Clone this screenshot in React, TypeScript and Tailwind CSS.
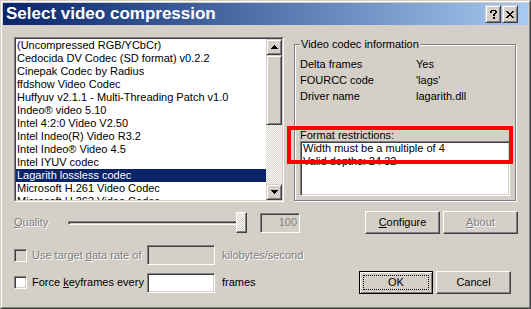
import type { ReactNode } from 'react'

const codecs = [
  '(Uncompressed RGB/YCbCr)',
  'Cedocida DV Codec (SD format) v0.2.2',
  'Cinepak Codec by Radius',
  'ffdshow Video Codec',
  'Huffyuv v2.1.1 - Multi-Threading Patch v1.0',
  'Indeo® video 5.10',
  'Intel 4:2:0 Video V2.50',
  'Intel Indeo(R) Video R3.2',
  'Intel Indeo® Video 4.5',
  'Intel IYUV codec',
  'Lagarith lossless codec',
  'Microsoft H.261 Video Codec',
  'Microsoft H.263 Video Codec',
]
const selected = 10

const info = [
  ['Delta frames', 'Yes'],
  ['FOURCC code', "'lags'"],
  ['Driver name', 'lagarith.dll'],
]

const HELP = ['.XXXXX.', 'XX...XX', 'XX...XX', '....XX.', '...XX..', '...XX..', '.......', '...XX..', '...XX..']
const CLOSE = ['XX....XX', '.XX..XX.', '..XXXX..', '...XX...', '..XXXX..', '.XX..XX.', 'XX....XX']
const UP = ['...X...', '..XXX..', '.XXXXX.', 'XXXXXXX']
const DOWN = ['XXXXXXX', '.XXXXX.', '..XXX..', '...X...']

// tiny pixel glyphs, drawn one cell at a time
function Pixels({ rows }: { rows: string[] }) {
  const w = rows[0].length
  const h = rows.length
  return (
    <svg width={w} height={h} viewBox={`0 0 ${w} ${h}`} shapeRendering="crispEdges">
      {rows.flatMap((r, y) =>
        r.split('').map((c, x) => (c === 'X' ? <rect key={`${x}-${y}`} x={x} y={y} width={1} height={1} fill="#000" /> : null))
      )}
    </svg>
  )
}

const raised3d = 'border border-t-[#d4d0c8] border-l-[#d4d0c8] border-r-[#404040] border-b-[#404040] shadow-[inset_1px_1px_0_#fff,inset_-1px_-1px_0_#808080] bg-[#d4d0c8]'
const push = 'border border-t-white border-l-white border-r-[#404040] border-b-[#404040] shadow-[inset_-1px_-1px_0_#808080] bg-[#d4d0c8]'
const sunken = 'border border-t-[#808080] border-l-[#808080] border-r-white border-b-white shadow-[inset_1px_1px_0_#404040,inset_-1px_-1px_0_#d4d0c8]'
const dim = 'text-[#808080] [text-shadow:1px_1px_0_#fff]'
const checker = 'bg-[image:repeating-conic-gradient(#fff_0_25%,#d4d0c8_0_50%)] bg-[length:2px_2px]'

function Button({ children, className = '' }: { children: ReactNode; className?: string }) {
  return <div className={`flex items-center justify-center h-[23px] w-[75px] ${push} ${className}`}>{children}</div>
}

export default function App() {
  return (
    <div className="relative w-[531px] h-[309px] overflow-hidden border border-t-[#d4d0c8] border-l-[#d4d0c8] border-r-[#404040] border-b-[#404040] bg-[#d4d0c8] font-['Liberation_Sans',Arial,sans-serif] text-[11px] leading-[13px] text-black">
      <div className="h-full border border-t-white border-l-white border-r-[#808080] border-b-[#808080] p-px">
        {/* title bar */}
        <div className="flex items-center h-[22px] pl-[3px] pr-[10px] bg-linear-to-r from-[#0a246a] to-[#a6caf0]">
          <span className="text-[17px] leading-[22px] font-bold text-white whitespace-nowrap">Select video compression</span>
          <div className="ml-auto flex gap-px">
            <div className={`flex items-center justify-center w-[16px] h-[18px] pl-px ${raised3d}`}>
              <Pixels rows={HELP} />
            </div>
            <div className={`flex items-center justify-center w-[16px] h-[18px] ${raised3d}`}>
              <Pixels rows={CLOSE} />
            </div>
          </div>
        </div>

        <div className="pl-[11px]">
          <div className="flex mt-[12px]">
            {/* codec list */}
            <div className="flex w-[270px] h-[165px] border border-t-[#808080] border-l-[#808080] border-r-white border-b-white">
              <div className="flex flex-1 min-w-0 border border-t-[#404040] border-l-[#404040] border-r-[#d4d0c8] border-b-[#d4d0c8] bg-white">
                <div className="flex-1 min-w-0 overflow-hidden">
                  {codecs.map((c, i) => (
                    <div key={c} className={`h-[13px] pl-px whitespace-nowrap ${i === selected ? 'bg-[#0a246a] text-white' : ''}`}>
                      {c}
                    </div>
                  ))}
                </div>
                <div className="flex flex-col w-[16px] shrink-0">
                  <div className={`flex items-center justify-center h-[16px] shrink-0 ${raised3d}`}>
                    <Pixels rows={UP} />
                  </div>
                  <div className={`h-[70px] shrink-0 ${raised3d}`} />
                  <div className={`flex-1 ${checker}`} />
                  <div className={`flex items-center justify-center h-[16px] shrink-0 ${raised3d}`}>
                    <Pixels rows={DOWN} />
                  </div>
                </div>
              </div>
            </div>

            {/* info group */}
            <div className="relative mt-[7px] ml-[10px] w-[222px] h-[157px] border border-[#808080] shadow-[1px_1px_0_#fff,inset_1px_1px_0_#fff] pt-[11px] pl-[5px]">
              <span className="absolute -top-[7px] left-[5px] px-px bg-[#d4d0c8] whitespace-nowrap">Video codec information</span>
              <div className="grid grid-cols-[116px_1fr] leading-[16px]">
                {info.map(([k, v]) => (
                  <div key={k} className="contents">
                    <span>{k}</span>
                    <span>{v}</span>
                  </div>
                ))}
              </div>
              <div className="mt-[25px] leading-[12px]">Format restrictions:</div>
              <div className={`w-[210px] h-[55px] bg-white pl-[2px] ${sunken}`}>
                <div>Width must be a multiple of 4</div>
                <div>Valid depths: 24 32</div>
              </div>
            </div>
          </div>

          {/* quality row */}
          <div className="flex items-center h-[23px] mt-[9px]">
            <div className={`w-[54px] ${dim}`}>
              <span className="underline underline-offset-1">Q</span>uality
            </div>
            <div className="relative flex items-center w-[179px] h-[21px]">
              <div className={`w-full h-[4px] ${sunken}`} />
              <div className={`absolute right-0 top-0 w-[11px] h-[21px] border border-t-white border-l-white border-r-[#404040] border-b-[#404040] shadow-[inset_-1px_-1px_0_#808080] ${checker}`} />
            </div>
            <div className={`ml-[13px] w-[40px] h-[20px] flex items-center justify-end pr-[2px] text-[#808080] ${sunken}`}>100</div>
            <Button className="ml-[65px]">
              <span><span className="underline underline-offset-1">C</span>onfigure</span>
            </Button>
            <Button className="ml-[3px]">
              <span className={dim}><span className="underline underline-offset-1">A</span>bout</span>
            </Button>
          </div>

          {/* data rate row */}
          <div className="flex items-center h-[20px] mt-[11px]">
            <div className="flex items-center w-[133px]">
              <div className={`w-[13px] h-[13px] bg-[#d4d0c8] ${sunken}`} />
              <span className={`ml-[5px] whitespace-nowrap ${dim}`}>
                Use target <span className="underline underline-offset-1">d</span>ata rate of
              </span>
            </div>
            <div className={`w-[68px] h-[20px] bg-[#d4d0c8] ${sunken}`} />
            <span className={`ml-[7px] ${dim}`}>kilobytes/second</span>
          </div>

          {/* keyframes row */}
          <div className="flex items-center h-[23px] mt-[6px]">
            <div className="flex items-center w-[133px]">
              <div className={`w-[13px] h-[13px] bg-white ${sunken}`} />
              <span className="ml-[5px] whitespace-nowrap">
                Force <span className="underline underline-offset-1">k</span>eyframes every
              </span>
            </div>
            <div className={`w-[68px] h-[20px] bg-white ${sunken}`} />
            <span className="ml-[7px] w-[137px]">frames</span>
            <div className="flex w-[74px] h-[23px] border border-black p-[3px] shadow-[inset_1px_1px_0_#fff,inset_-1px_-1px_0_#808080]">
              <div className="flex flex-1 items-center justify-center border border-dotted border-black">OK</div>
            </div>
            <Button className="ml-[3px] w-[74px]">Cancel</Button>
          </div>
        </div>
      </div>

      {/* annotation */}
      <div className="absolute left-[286px] top-[125px] w-[226px] h-[38px] border-4 border-[#ff0000]" />
    </div>
  )
}
